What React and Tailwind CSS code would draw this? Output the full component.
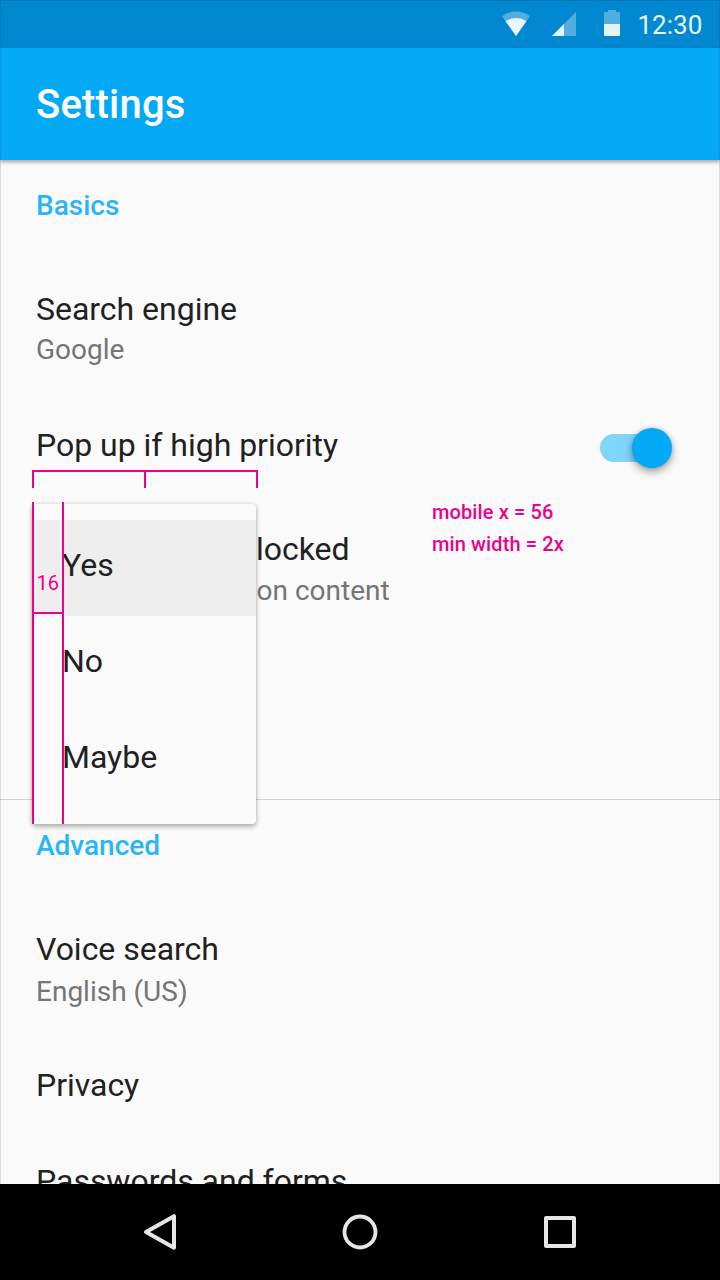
function StatusBar() {
  return (
    <div className="flex h-12 shrink-0 items-center bg-[#0288d1] text-white">
      <svg className="ml-auto h-12 w-[136px]" viewBox="0 0 136 48" fill="white">
        <path d="M20 36 6 16.2A23.5 23.5 0 0 1 34 16.2Z" opacity=".32" />
        <path d="M20 36 9.6 21.2A18 18 0 0 1 30.4 21.2Z" opacity=".88" />
        <path d="M56 36 80 12V36Z" opacity=".32" />
        <path d="M56 36 68 24V36Z" opacity=".85" />
        <path d="M108 24V13a1 1 0 0 1 1-1h3v-2h8v2h3a1 1 0 0 1 1 1V24Z" opacity=".32" />
        <path d="M108 24h16v11a1 1 0 0 1-1 1h-14a1 1 0 0 1-1-1Z" opacity=".9" />
      </svg>
      <span className="w-[88px] pt-0.5 pl-[5.5px] text-[26px] leading-[46px] text-white/90">12:30</span>
    </div>
  );
}

function Title({ children }) {
  return <div className="text-[32px] leading-10 tracking-[-0.02px]">{children}</div>;
}

function Subtitle({ children }) {
  return <div className="text-[28px] leading-9 text-[#757575]">{children}</div>;
}

function Subheader({ children }) {
  return <h2 className="pl-9 text-[28px] leading-9 font-medium text-[#29b6f6]">{children}</h2>;
}

function Switch() {
  return (
    <div className="relative mt-[9px] mr-12 h-7 w-[72px]">
      <div className="h-7 w-16 rounded-full bg-[#81d4fa]" />
      <div className="absolute -top-1.5 right-0 size-10 rounded-full bg-[#03a9f4] shadow-[0_4px_8px_rgba(0,0,0,0.34),0_0_4px_rgba(0,0,0,0.16)]" />
    </div>
  );
}

function Menu() {
  return (
    <div className="absolute top-[504px] left-8 h-80 w-56 rounded-[4px] bg-[#fafafa] py-4 text-[32px] tracking-[-0.02px] shadow-[0_3px_5px_rgba(0,0,0,0.26),0_0_4px_rgba(0,0,0,0.14)]">
      <div className="h-24 bg-[#eeeeee] pl-[30px] leading-[90px]">Yes</div>
      <div className="h-24 pl-[30px] leading-[90px]">No</div>
      <div className="h-24 pl-[30px] leading-[90px]">Maybe</div>
    </div>
  );
}

function Measurements() {
  return (
    <div className="text-xl text-[#ec008c]">
      <div className="absolute top-[470px] left-8 flex h-[18px] w-[226px] border-2 border-b-0 border-[#ec008c]">
        <div className="ml-[110px] w-0.5 bg-[#ec008c]" />
      </div>
      <div className="absolute top-[502px] left-8 h-[322px] w-8 border-x-2 border-[#ec008c]">
        <div className="h-28 border-b-2 border-[#ec008c] pt-[69px] pl-[2.5px] leading-6">16</div>
      </div>
      <div className="absolute top-[496px] left-[432px] leading-8 font-medium tracking-[0.12px]">
        <div>mobile x = 56</div>
        <div>min width = 2x</div>
      </div>
    </div>
  );
}

function NavBar() {
  return (
    <div className="flex h-24 shrink-0 items-center justify-center gap-[152px] bg-black">
      <svg className="size-12" viewBox="0 0 48 48" fill="none" stroke="#e6e6e6" strokeWidth="4" strokeLinejoin="round">
        <path d="M38 8.2V39.8L10 24Z" />
      </svg>
      <svg className="size-12" viewBox="0 0 48 48" fill="none" stroke="#e6e6e6" strokeWidth="3.8">
        <circle cx="24" cy="24" r="15.5" />
      </svg>
      <svg className="size-12" viewBox="0 0 48 48" fill="none" stroke="#e6e6e6" strokeWidth="4" strokeLinejoin="round">
        <rect x="10" y="10" width="28" height="28" />
      </svg>
    </div>
  );
}

export default function App() {
  return (
    <div className="relative flex h-[1280px] w-[720px] flex-col overflow-hidden bg-[#fafafa] font-['Roboto',sans-serif] text-[#212121]">
      <StatusBar />
      <header className="z-10 h-28 shrink-0 bg-[#03a9f4] pl-9 shadow-[0_2px_4px_rgba(0,0,0,0.35)]">
        <h1 className="text-[40px] leading-[114px] font-medium tracking-[0.2px] text-white">Settings</h1>
      </header>
      <main className="min-h-0 flex-1 overflow-hidden pt-7">
        <Subheader>Basics</Subheader>
        <div className="mt-[65px] pl-9">
          <Title>Search engine</Title>
          <div className="mt-[3px]"><Subtitle>Google</Subtitle></div>
        </div>
        <div className="mt-[57px] flex h-10 justify-between pl-9">
          <Title>Pop up if high priority</Title>
          <Switch />
        </div>
        <div className="mt-16 pl-64">
          <Title>locked</Title>
          <div className="mt-1 pl-[0.5px]"><Subtitle>on content</Subtitle></div>
        </div>
        <div className="mt-[190px] h-px bg-[#cfcfcf]" />
        <div className="mt-7"><Subheader>Advanced</Subheader></div>
        <div className="mt-[65px] pl-9">
          <Title>Voice search</Title>
          <div className="mt-[5px]"><Subtitle>English (US)</Subtitle></div>
        </div>
        <div className="mt-[55px] pl-9"><Title>Privacy</Title></div>
        <div className="mt-14 pl-9"><Title>Passwords and forms</Title></div>
      </main>
      <NavBar />
      <Menu />
      <Measurements />
      <div className="pointer-events-none absolute inset-0 z-20 border border-black/12" />
    </div>
  );
}
